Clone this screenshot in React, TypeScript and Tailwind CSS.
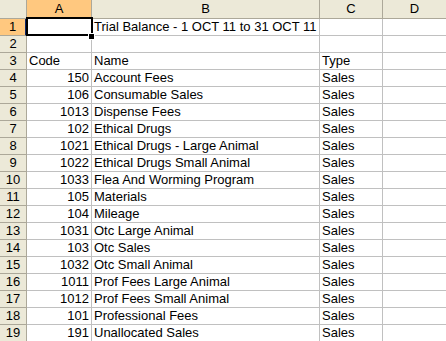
import React from "react";

const rows: [string, string, string][] = [
  ["", "Trial Balance - 1 OCT 11 to 31 OCT 11", ""],
  ["", "", ""],
  ["Code", "Name", "Type"],
  ["150", "Account Fees", "Sales"],
  ["106", "Consumable Sales", "Sales"],
  ["1013", "Dispense Fees", "Sales"],
  ["102", "Ethical Drugs", "Sales"],
  ["1021", "Ethical Drugs - Large Animal", "Sales"],
  ["1022", "Ethical Drugs Small Animal", "Sales"],
  ["1033", "Flea And Worming Program", "Sales"],
  ["105", "Materials", "Sales"],
  ["104", "Mileage", "Sales"],
  ["1031", "Otc Large Animal", "Sales"],
  ["103", "Otc Sales", "Sales"],
  ["1032", "Otc Small Animal", "Sales"],
  ["1011", "Prof Fees Large Animal", "Sales"],
  ["1012", "Prof Fees Small Animal", "Sales"],
  ["101", "Professional Fees", "Sales"],
  ["191", "Unallocated Sales", "Sales"],
];

export default function App() {
  return (
    <div
      className="relative w-[446px] h-[341px] overflow-hidden bg-white text-[13px] leading-[16px] text-black"
      style={{ fontFamily: '"Liberation Sans", Arial, sans-serif' }}
    >
      <div className="grid grid-cols-[27px_65px_228px_63px_63px]">
        {/* header row */}
        <div className="h-[19px] bg-[#ECE9D8] border-r border-b border-[#ACA899]" />
        <div className="h-[19px] bg-[#FFC87F] border-r border-[#ACA899] border-b-2 border-b-[#0A246A] flex items-center justify-center">A</div>
        <div className="h-[19px] bg-[#ECE9D8] border-r border-b border-[#ACA899] flex items-center justify-center">B</div>
        <div className="h-[19px] bg-[#ECE9D8] border-r border-b border-[#ACA899] flex items-center justify-center">C</div>
        <div className="h-[19px] bg-[#ECE9D8] border-b border-[#ACA899] flex items-center justify-center">D</div>
        {rows.map((r, i) => (
          <React.Fragment key={i}>
            <div
              className={
                i === 0
                  ? "h-[17px] bg-[#FFC87F] border-b border-[#ACA899] border-r-2 border-r-[#0A246A] flex items-center justify-center"
                  : "h-[17px] bg-[#ECE9D8] border-b border-r border-[#ACA899] flex items-center justify-center"
              }
            >
              {i + 1}
            </div>
            <div
              className={
                "h-[17px] border-r border-b border-[#C0C0C0] px-[2px] flex items-center whitespace-nowrap " +
                (i >= 3 ? "justify-end" : "justify-start")
              }
            >
              {r[0]}
            </div>
            <div className="h-[17px] border-r border-b border-[#C0C0C0] px-[2px] flex items-center whitespace-nowrap overflow-visible">
              {r[1]}
            </div>
            <div className="h-[17px] border-r border-b border-[#C0C0C0] px-[2px] flex items-center whitespace-nowrap">
              {r[2]}
            </div>
            <div className="h-[17px] border-b border-[#C0C0C0]" />
          </React.Fragment>
        ))}
      </div>
      {/* selection box */}
      <div className="absolute left-[26px] top-[17px] w-[67px] h-[19px] border-2 border-black pointer-events-none" />
      <div className="absolute left-[88px] top-[33px] w-[7px] h-[7px] bg-black border border-white" />
    </div>
  );
}
